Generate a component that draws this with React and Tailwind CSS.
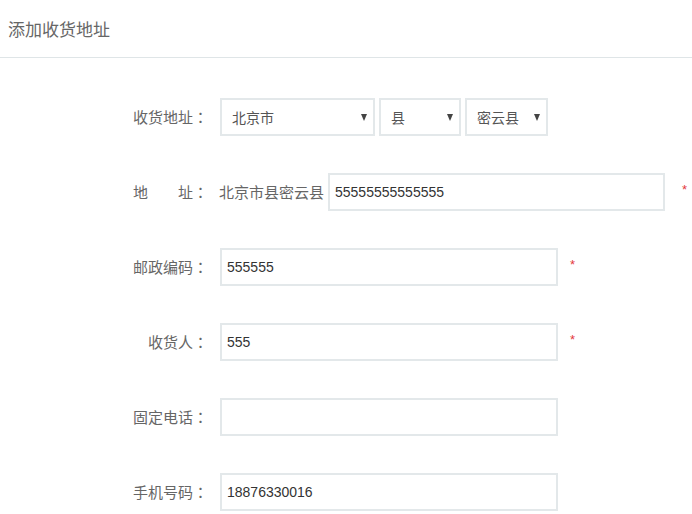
import React from 'react';

const font = { fontFamily: '"Microsoft YaHei", "Noto Sans CJK SC", "Liberation Sans", sans-serif' };

const Arrow = () => (
  <svg width="6" height="7" viewBox="0 0 6 7" className="shrink-0">
    <path d="M0 0h6L3 7z" fill="#444" />
  </svg>
);

const Select = ({ label, width }) => (
  <div className={`${width} h-[38px] border-2 border-[#e3e8ea] flex items-center justify-between pl-[10px] pr-[6px] text-[14px] text-[#555]`}>
    <span>{label}</span>
    <Arrow />
  </div>
);

const Star = ({ ml }) => (
  <span className={`${ml} -mt-[5px] text-[13px] leading-none text-[#e4393c]`} style={{ fontFamily: '"Liberation Sans", sans-serif' }}>
    *
  </span>
);

const Colon = () => <span style={{ fontFamily: '"Noto Sans CJK TC", sans-serif' }}>：</span>;

const Row = ({ label, children }) => (
  <div className="flex items-center h-[38px]">
    <div className="w-[208px] text-right text-[15px] text-[#666] shrink-0">
      {label}
      <Colon />
    </div>
    <div className="ml-[12px] flex items-center">{children}</div>
  </div>
);

const Input = ({ value, width }) => (
  <div
    className={`${width} h-[38px] border-2 border-[#e3e8ea] flex items-center pl-[5px] text-[14px] text-[#333]`}
    style={{ fontFamily: '"Liberation Sans", Arial, sans-serif' }}
  >
    {value}
  </div>
);

export default function App() {
  return (
    <div className="w-[692px] h-[514px] bg-white overflow-hidden" style={font}>
      <div className="h-[58px] border-b border-[#dfe5e7] flex items-center pl-[8px] text-[17px] text-[#666]">
        添加收货地址
      </div>
      <div className="pt-[40px] flex flex-col gap-[37px]">
        <Row label="收货地址">
          <div className="flex gap-[4px]">
            <Select label="北京市" width="w-[155px]" />
            <Select label="县" width="w-[82px]" />
            <Select label="密云县" width="w-[83px]" />
          </div>
        </Row>
        <Row
          label={
            <span>
              地<span className="inline-block w-[30px]" />址
            </span>
          }
        >
          <span className="text-[15px] text-[#666] -ml-[1px] mr-[4px]">北京市县密云县</span>
          <Input value="55555555555555" width="w-[337px]" />
          <Star ml="ml-[17px]" />
        </Row>
        <Row label="邮政编码">
          <Input value="555555" width="w-[338px]" />
          <Star ml="ml-[12px]" />
        </Row>
        <Row label="收货人">
          <Input value="555" width="w-[338px]" />
          <Star ml="ml-[12px]" />
        </Row>
        <Row label="固定电话">
          <Input value="" width="w-[338px]" />
        </Row>
        <Row label="手机号码">
          <Input value="18876330016" width="w-[338px]" />
        </Row>
      </div>
    </div>
  );
}
